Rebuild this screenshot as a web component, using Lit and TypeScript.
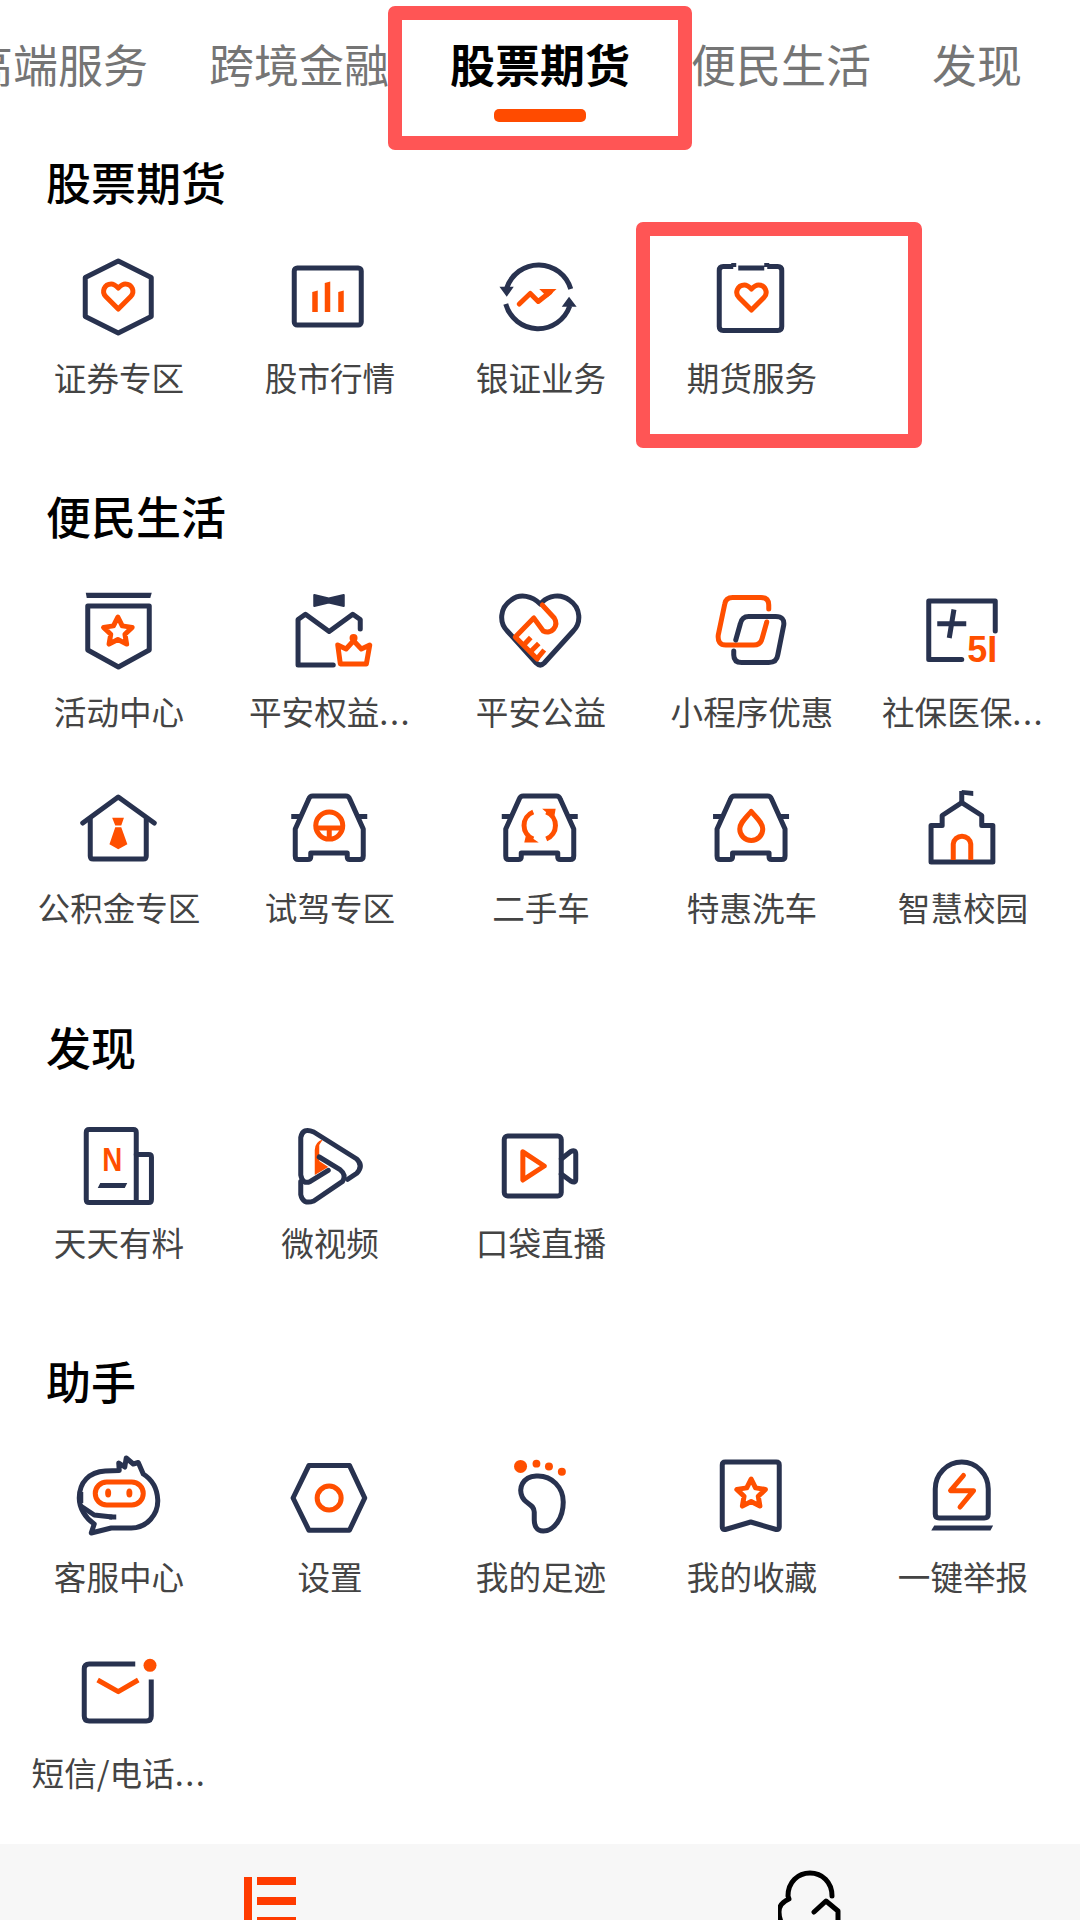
import { LitElement, html, css, svg } from "lit";
import { customElement } from "lit/decorators.js";

const star = (cx: number, cy: number, R: number, r: number) => {
  const pts: string[] = [];
  for (let i = 0; i < 10; i++) {
    const a = (Math.PI / 5) * i - Math.PI / 2;
    const d = i % 2 ? r : R;
    pts.push(`${(cx + d * Math.cos(a)).toFixed(1)},${(cy + d * Math.sin(a)).toFixed(1)}`);
  }
  return pts.join(" ");
};

const heart = (dx: number, dy: number) => svg`<path class="o" transform="translate(${dx} ${dy})" d="M43 56 L30.5 43.5 C26 39 29 31 36 31 C39 31 41 33 43 35 C45 33 47 31 50 31 C57 31 60 39 55.5 43.5 Z"/>`;

const carBody = (dx: number) => svg`<g transform="translate(${dx} 0)">
  <path class="n" d="M9.5 46 L23 16 Q24 13 27 13 H60 Q63 13 64 16 L77.5 46 V73 Q77.5 76.5 74 76.5 H64 Q61.5 76.5 61.5 74 V70 H25 V74 Q25 76.5 22 76.5 H12.5 Q9.5 76.5 9.5 73 Z"/>
  <path class="n b" d="M5.5 33.5 H16 M71 33.5 H81.5"/>
</g>`;

const ICONS: Record<string, unknown> = {
  shieldHeart: svg`<path class="n" d="M43 8 L76 24.5 V63.5 L43 80 L10 63.5 V24.5 Z"/>${heart(0, 0)}`,
  chart: svg`<rect class="n" x="8.5" y="15" width="67" height="57" rx="3"/>
    <path class="fo" d="M26.5 39 L32 37.5 V59 H26.5 Z M39 30 L44.5 28.5 V59 H39 Z M52.5 39 L58 37.5 V59 H52.5 Z"/>`,
  cycle: svg`<path class="n b" d="M10.5 35 A33.5 33.5 0 0 1 74.5 36"/>
    <path class="n b" d="M9.5 51 A33.5 33.5 0 0 0 73.5 53"/>
    <path class="fn" d="M3.2 33.7 H17.5 L10.5 43.7 Z M65.5 53.7 H80.4 L72.8 43.7 Z"/>
    <path class="o" stroke-linejoin="miter" d="M23 51 L34 40.5 L42 48.5 L54 39"/>
    <path class="fo" d="M43 36 H60.3 L51.3 44.3 Z"/>`,
  clip: svg`<path class="n b" d="M26.5 13.5 H16.5 Q12.5 13.5 12.5 17.5 V73.5 Q12.5 77.5 16.5 77.5 H71 Q75 77.5 75 73.5 V17.5 Q75 13.5 71 13.5 H60.5 M31.5 15 H57.5 M27 10 V14 M60 10 V14"/>${heart(1.7, 1)}`,
  shieldStar: svg`<path class="fn" d="M10.5 5.7 H76.5 L75 11 H11.5 Z"/>
    <path class="n" d="M12.5 19 H74 V63 L43.2 80 L12.5 63 Z"/>
    <polygon class="o" points=${star(42.6, 45, 15, 7.5)}/>`,
  gift: svg`<path class="fn j" d="M28.5 8 L43 11.5 L58 8 V19 L43 15.5 L28.5 19 Z"/>
    <path class="n" d="M74.5 42 V32.5 L67 27.3 L43.4 44.5 L19.7 27.3 L12.3 32.5 V78 H47.5"/>
    <path class="o" stroke-width="4.5" d="M54.6 77 L52 58 L60.3 62 L67.8 53.7 L75.6 62 L84 58 L80.6 77 Z"/>
    <circle class="fo" cx="67.8" cy="51" r="4"/>`,
  handHeart: svg`<path class="n" d="M44 17 C36 9 24 6 15 13 C3 21 3 36 11 44 L40 76 Q44 80 48 76 L77 44 C85 36 85 21 73 13 C64 6 52 9 46 15"/>
    <path class="o" d="M46 18 L58 31 C63 39 55 48 47 44 L37.5 31 L19 50 L41 72"/>
    <path class="o b" stroke-width="4" d="M27.5 58 L34.5 50.5 M34 65 L42.5 56.5 M41 71.5 L48 63"/>`,
  links: svg`<path class="o" d="M62 22 V18 Q62 10.5 54 10.5 H26 Q19 10.5 18 17 L11.5 48 Q10.5 58 19 58 H47 Q54 58 55.5 51 L60 35"/>
    <path class="n" d="M29 53 L33.5 37 Q35 29.5 42 29.5 H69 Q78 29.5 77 38 L71 68 Q70 75.5 62 75.5 H35 Q27 75.5 27 68 V64"/>`,
  social: svg`<path class="n" d="M44.5 72.5 H11.5 V14 H78 V44"/>
    <path class="n b" d="M20 36.8 H49 M36.7 22.5 L32 51"/>
    <text class="to" x="50" y="75" font-size="37" textLength="30" lengthAdjust="spacingAndGlyphs">5I</text>`,
  houseTie: svg`<path class="n" d="M7.5 40 L43 14 L79 40"/>
    <path class="n" d="M15 36 V73 Q15 76 18 76 H68 Q71 76 71 73 V36"/>
    <path class="fo" d="M36.9 34.8 H48.7 L46 42.6 H40 Z M40 44.3 H46 L52.1 61.2 L43 66.3 L34.2 61.2 Z"/>`,
  carWheel: svg`${carBody(0)}
    <circle class="o" cx="43.5" cy="42.6" r="13.5"/>
    <path class="o b" d="M30 45 H57 M43.5 45 V56"/>`,
  carSwap: svg`${carBody(0)}
    <path class="o b" d="M37 29 A14.5 14.5 0 0 0 37 56 M50 56 A14.5 14.5 0 0 0 50 29"/>
    <path class="fo" d="M45.9 25.7 H59.4 L57.7 35.7 Z M28 59.5 H42.5 L30 51 Z"/>`,
  carDrop: svg`${carBody(0.8)}
    <path class="o" d="M44.4 28.5 C38 36 33 40 33 46 A11.5 11.5 0 0 0 56 46 C56 40 51 36 44.4 28.5 Z"/>`,
  school: svg`<path class="n" d="M13.8 42.6 H24.9 V32.5 L44.5 19.6 L64.5 32.5 V42.6 H75.6 V79 H13.8 Z"/>
    <path class="n b" stroke-width="3.5" d="M44.5 8 V19"/>
    <path class="fn" d="M44.5 7 L56 8 V13 L44.5 11.5 Z"/>
    <path class="o b" d="M36 77 V61 A8.8 8.8 0 0 1 53.5 61 V77"/>`,
  news: svg`<path class="n" d="M14 11.5 H58 Q61 11.5 61 14.5 V84.5 H14 Q11 84.5 11 81.5 V14.5 Q11 11.5 14 11.5 Z"/>
    <path class="n" d="M61 36.5 H73.5 Q76.2 36.5 76.2 39 V81.5 Q76.2 84.5 73.5 84.5 H61"/>
    <text class="to" x="27" y="53.4" font-size="34" textLength="20" lengthAdjust="spacingAndGlyphs">N</text>
    <path class="fn" d="M25 65 H52 L49.5 70 H22.5 Z"/>`,
  play: svg`<path class="fo" d="M37 21.5 Q29 24 29 32 V57 L42.5 49 L33.5 43 V27 Z"/>
    <path class="n" d="M62 61.3 L71 55.2 Q78 48 71 41 L28 14 Q17 9 15 19.5 V57 Q17 67 24.6 63.4 L42.5 52.4"/>
    <path class="n" d="M33.5 39 L54.3 51.6 Q61 57 56.8 63.4 L28 83 Q17 87 15 76.6 V63.4"/>`,
  cam: svg`<rect class="n" x="8" y="18" width="57" height="60" rx="3.5"/>
    <path class="n" d="M65 41 L74.5 33.5 Q79.5 31 79.5 36 V61 Q79.5 66 74.5 63 L65 56"/>
    <path class="o" d="M26.6 33.8 L48 48 L26.6 62 Z"/>`,
  robot: svg`<path class="n" stroke-width="4.5" d="M44 18.5 L43.5 11 L49.5 15 L51 6 L58 12 L63 10.5 L68 22 C76 27 82 36 82.5 48 C83 62 72 76 56 76 H36 L16 81 L19 72 C10 66 4 56 4 46 C4 30 14 20 30 19 Z"/>
    <path class="n b" stroke-width="3.5" d="M5.5 54 L19 63 L37 65"/>
    <path class="n b" stroke-width="7" d="M5.5 40 V51 M34 65 H41"/>
    <rect class="o" x="20" y="30" width="48" height="23" rx="11.5"/>
    <ellipse class="fo" cx="32.9" cy="41" rx="3" ry="4.5"/>
    <ellipse class="fo" cx="54.1" cy="41" rx="3" ry="4.5"/>`,
  gear: svg`<path class="n" d="M7.3 46 L23.2 13.4 H63.7 L79 46 L63.7 78.3 H23.2 Z"/>
    <circle class="o" cx="43.4" cy="46.1" r="12"/>`,
  foot: svg`<circle class="fo" cx="24.3" cy="14.4" r="6.5"/>
    <circle class="fo" cx="40.2" cy="11.7" r="3.9"/>
    <circle class="fo" cx="52.7" cy="14.4" r="4"/>
    <circle class="fo" cx="65.6" cy="19.8" r="4"/>
    <path class="n" d="M26 45 C22 36 26 25 40 24 C56 23 67 36 67 50 C67 66 58 79 47 79 C40 79 38 73 38 68 V60 C38 52 29 52 26 45 Z"/>`,
  bookmark: svg`<path class="n" d="M18.5 10 H69.5 Q72.5 10 72.5 13 V75 Q72.5 78 69.5 77.5 L44 70 L18.5 77.5 Q15.5 78 15.5 75 V13 Q15.5 10 18.5 10 Z"/>
    <polygon class="o" points=${star(44.4, 42, 15, 7.5)}/>`,
  siren: svg`<path class="n" d="M18 37 A26.5 27 0 0 1 71 37 V62 Q71 66 67 66 H22 Q18 66 18 62 Z"/>
    <path class="fn" d="M17 73.5 H75.9 L73.2 78.6 H14 Z"/>
    <path class="o" stroke-linejoin="miter" d="M46.2 23.5 L33.3 38.7 H56.3 L42.8 55"/>`,
  mail: svg`<path class="n b" d="M60 16 H14 Q9 16 9 21 V68 Q9 73 14 73 H71 Q76 73 76 68 V31.5"/>
    <path class="o b" d="M22.4 32 L43 43.7 L63 32"/>
    <circle class="fo" cx="74.75" cy="17.3" r="6.5"/>`,
};

interface Item { label: string; icon: string; more?: boolean; }
interface Section { title: string; items: Item[]; }

const SECTIONS: Section[] = [
  {
    title: "股票期货",
    items: [
      { label: "证券专区", icon: "shieldHeart" },
      { label: "股市行情", icon: "chart" },
      { label: "银证业务", icon: "cycle" },
      { label: "期货服务", icon: "clip" },
    ],
  },
  {
    title: "便民生活",
    items: [
      { label: "活动中心", icon: "shieldStar" },
      { label: "平安权益", icon: "gift", more: true },
      { label: "平安公益", icon: "handHeart" },
      { label: "小程序优惠", icon: "links" },
      { label: "社保医保", icon: "social", more: true },
      { label: "公积金专区", icon: "houseTie" },
      { label: "试驾专区", icon: "carWheel" },
      { label: "二手车", icon: "carSwap" },
      { label: "特惠洗车", icon: "carDrop" },
      { label: "智慧校园", icon: "school" },
    ],
  },
  {
    title: "发现",
    items: [
      { label: "天天有料", icon: "news" },
      { label: "微视频", icon: "play" },
      { label: "口袋直播", icon: "cam" },
    ],
  },
  {
    title: "助手",
    items: [
      { label: "客服中心", icon: "robot" },
      { label: "设置", icon: "gear" },
      { label: "我的足迹", icon: "foot" },
      { label: "我的收藏", icon: "bookmark" },
      { label: "一键举报", icon: "siren" },
      { label: "短信/电话", icon: "mail", more: true },
    ],
  },
];

const TABS = ["高端服务", "跨境金融", "股票期货", "便民生活", "发现"];

// Icon geometry sits a fraction left of the column centre, more so towards the right.
const NUDGE = [-0.25, 0.25, 0.75, 1.25, 1.75];

@customElement("app-root")
export class AppRoot extends LitElement {
  static styles = css`
    :host {
      display: block;
      position: relative;
      width: 1080px;
      height: 1920px;
      overflow: hidden;
      background: #fff;
      font-family: "Noto Sans CJK SC", "Noto Sans", sans-serif;
    }
    .tabs {
      display: flex;
      gap: 61px;
      margin-left: -32px;
      height: 150px;
      white-space: nowrap;
    }
    .tab {
      display: flex;
      flex-direction: column;
      align-items: center;
      padding-top: 34px;
      font-size: 45px;
      line-height: 60px;
      color: #757575;
    }
    .tab.active {
      color: #000;
      font-weight: 700;
    }
    .tab i {
      display: block;
      width: 92px;
      height: 13px;
      margin-top: 15px;
      border-radius: 5px;
      background: #ff4b00;
    }
    .sections {
      display: flex;
      flex-direction: column;
      gap: 74.3px;
    }
    h2 {
      margin: 0;
      padding-left: 46px;
      font-size: 45px;
      line-height: 64px;
      font-weight: 500;
      color: #000;
    }
    .grid {
      display: grid;
      grid-template-columns: repeat(5, 211px);
      padding: 0 13.5px;
    }
    .item {
      display: flex;
      flex-direction: column;
      align-items: center;
      height: 196px;
      padding-top: 39px;
      box-sizing: border-box;
    }
    .item svg {
      width: 88px;
      height: 88px;
      flex: none;
    }
    .item span {
      margin-top: 16px;
      font-size: 32.6px;
      line-height: 40px;
      color: #444;
      white-space: nowrap;
    }
    .item em {
      font-style: normal;
      letter-spacing: 1.5px;
    }
    .n, .o {
      fill: none;
      stroke-width: 5;
      stroke-linejoin: round;
      stroke-linecap: round;
    }
    .n { stroke: #28324f; }
    .o { stroke: #ff4f00; }
    .b { stroke-linecap: butt; }
    .fn { fill: #28324f; }
    .fo { fill: #ff4f00; }
    .j { stroke: #28324f; stroke-width: 2; stroke-linejoin: round; }
    .to {
      fill: #ff4f00;
      font-family: "Liberation Sans", sans-serif;
      font-weight: 700;
    }
    .bottom {
      position: absolute;
      left: 0;
      right: 0;
      bottom: 0;
      height: 76px;
      display: flex;
      background: #f7f7f7;
      overflow: hidden;
    }
    .bottom div {
      flex: 1;
      display: flex;
      justify-content: center;
    }
    .bottom svg { flex: none; }
    .home { width: 52px; height: 76px; }
    .home path { fill: #ff3b00; }
    .me { width: 64px; height: 76px; }
    .me path {
      fill: none;
      stroke: #000;
      stroke-width: 5;
      stroke-linecap: round;
      stroke-linejoin: round;
    }
    .mark {
      position: absolute;
      box-sizing: border-box;
      border: 14px solid #ff5555;
      border-radius: 7px;
      pointer-events: none;
    }
    .mark.one { left: 388px; top: 6px; width: 304px; height: 144px; }
    .mark.two { left: 636px; top: 222px; width: 286px; height: 226px; }
  `;

  render() {
    return html`
      <div class="tabs">
        ${TABS.map(
          (t, i) => html`<div class="tab ${i === 2 ? "active" : ""}">${t}${i === 2 ? html`<i></i>` : ""}</div>`
        )}
      </div>
      <div class="sections">
        ${SECTIONS.map(
          (s) => html`<section>
            <h2>${s.title}</h2>
            <div class="grid">
              ${s.items.map(
                (it, i) => html`<div class="item">
                  <svg viewBox="${NUDGE[i % 5]} 0 88 88">${ICONS[it.icon]}</svg>
                  <span>${it.label}${it.more ? html`<em>...</em>` : ""}</span>
                </div>`
              )}
            </div>
          </section>`
        )}
      </div>
      <div class="bottom">
        <div>
          <svg class="home" viewBox="0 0 52 76">
            <path d="M0 33 H8 V76 H0 Z M13 33 H52 V41 H13 Z M13 53 H52 V61 H13 Z M13 73 H52 V81 H13 Z"/>
          </svg>
        </div>
        <div>
          <svg class="me" viewBox="0 0 64 76">
            <path d="M54 52 C54 38 44 29 32 29 C20 29 10 38 10 52 L11 55 C4 58 1 62 1 68 C1 72 2 76 4 80"/>
            <path d="M36 68 L48 57 L60 67 V80"/>
          </svg>
        </div>
      </div>
      <div class="mark one"></div>
      <div class="mark two"></div>
    `;
  }
}
